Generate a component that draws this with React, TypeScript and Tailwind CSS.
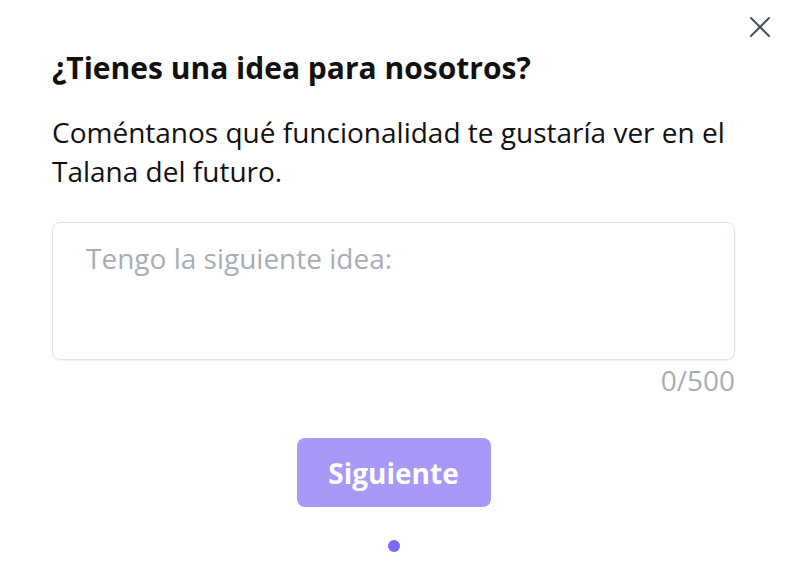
import React from "react";

export default function App() {
  return (
    <div
      className="relative w-[788px] h-[584px] bg-white"
      style={{ fontFamily: '"Open Sans", sans-serif' }}
    >
      <button className="absolute right-[17px] top-[16px] w-[22px] h-[22px] flex items-center justify-center">
        <svg width="22" height="22" viewBox="0 0 22 22" fill="none" stroke="#4a5059" strokeWidth="2" strokeLinecap="round">
          <line x1="2" y1="2" x2="20" y2="20" />
          <line x1="20" y1="2" x2="2" y2="20" />
        </svg>
      </button>
      <div className="flex flex-col pl-[52px] pr-[53px] pt-[48px]">
        <h1 className="text-[30px] leading-[40px] font-bold text-[#111]">
          ¿Tienes una idea para nosotros?
        </h1>
        <p className="mt-[25px] text-[28px] leading-[39px] text-[#111]">
          Coméntanos qué funcionalidad te gustaría ver en el Talana del futuro.
        </p>
        <div className="mt-[31px] h-[138px] border border-[#dfe2e6] rounded-[8px] shadow-[0_1px_2px_rgba(0,0,0,0.06)] px-[33px] pt-[16px]">
          <div className="text-[28px] leading-[39px] text-[#a7adb6]">
            Tengo la siguiente idea:
          </div>
        </div>
        <div className="text-right text-[28px] leading-[40px] text-[#a7adb6]">
          0/500
        </div>
        <div className="flex justify-center mt-[38px]">
          <button className="w-[194px] h-[69px] rounded-[8px] bg-[#a898f7] text-white text-[28px] font-bold">
            Siguiente
          </button>
        </div>
        <div className="flex justify-center mt-[33px]">
          <div className="w-[12px] h-[12px] rounded-full bg-[#7b6af5]" />
        </div>
      </div>
    </div>
  );
}
